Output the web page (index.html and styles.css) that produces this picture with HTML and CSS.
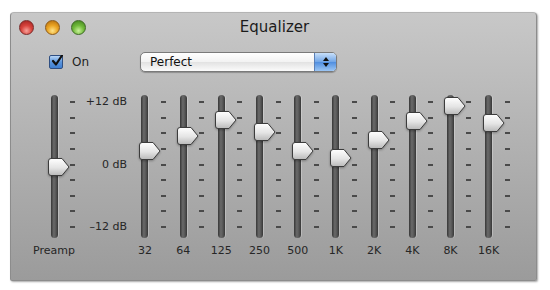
FILE: index.html
```html
<html>
<head>
  <link rel="stylesheet" href="styles.css">
</head>
<body>
  <div class="window">
    <div class="titlebar">
      <div class="lights">
        <span class="light red"></span>
        <span class="light orange"></span>
        <span class="light green"></span>
      </div>
      <div class="title">Equalizer</div>
      <div></div>
    </div>

    <div class="controls">
      <label class="check">
        <span class="box">
          <svg width="12" height="12" viewBox="0 0 12 12"><path d="M2 6 L5 9.5 L11 0.5" fill="none" stroke="#111" stroke-width="2.2" stroke-linecap="round" stroke-linejoin="round"/></svg>
        </span>
        On
      </label>
      <div class="popup">
        <span class="popup-text">Perfect</span>
        <span class="popup-arrows">
          <svg width="8" height="12" viewBox="0 0 8 12"><path d="M4 1 L7 5 H1 Z M4 11 L7 7 H1 Z" fill="#111"/></svg>
        </span>
      </div>
    </div>

    <div class="eq">
      <div class="band">
        <div class="band-top">
          <div class="slot"><div class="track"></div><svg class="thumb" style="top:63px" width="22" height="18" viewBox="0 0 22 18"><use href="#knob"/></svg></div>
          <div class="ticks"><i></i><i></i><i></i><i></i><i></i><i></i><i></i><i></i><i></i></div>
        </div>
        <div class="label">Preamp</div>
      </div>

      <div class="scale">
        <span>+12 dB</span>
        <span>0 dB</span>
        <span>–12 dB</span>
      </div>

      <div class="band">
        <div class="band-top">
          <div class="slot"><div class="track"></div><svg class="thumb" style="top:47px" width="22" height="18" viewBox="0 0 22 18"><use href="#knob"/></svg></div>
          <div class="ticks"><i></i><i></i><i></i><i></i><i></i><i></i><i></i><i></i><i></i></div>
        </div>
        <div class="label">32</div>
      </div>
      <div class="band">
        <div class="band-top">
          <div class="slot"><div class="track"></div><svg class="thumb" style="top:32px" width="22" height="18" viewBox="0 0 22 18"><use href="#knob"/></svg></div>
          <div class="ticks"><i></i><i></i><i></i><i></i><i></i><i></i><i></i><i></i><i></i></div>
        </div>
        <div class="label">64</div>
      </div>
      <div class="band">
        <div class="band-top">
          <div class="slot"><div class="track"></div><svg class="thumb" style="top:16px" width="22" height="18" viewBox="0 0 22 18"><use href="#knob"/></svg></div>
          <div class="ticks"><i></i><i></i><i></i><i></i><i></i><i></i><i></i><i></i><i></i></div>
        </div>
        <div class="label">125</div>
      </div>
      <div class="band">
        <div class="band-top">
          <div class="slot"><div class="track"></div><svg class="thumb" style="top:28px" width="22" height="18" viewBox="0 0 22 18"><use href="#knob"/></svg></div>
          <div class="ticks"><i></i><i></i><i></i><i></i><i></i><i></i><i></i><i></i><i></i></div>
        </div>
        <div class="label">250</div>
      </div>
      <div class="band">
        <div class="band-top">
          <div class="slot"><div class="track"></div><svg class="thumb" style="top:47px" width="22" height="18" viewBox="0 0 22 18"><use href="#knob"/></svg></div>
          <div class="ticks"><i></i><i></i><i></i><i></i><i></i><i></i><i></i><i></i><i></i></div>
        </div>
        <div class="label">500</div>
      </div>
      <div class="band">
        <div class="band-top">
          <div class="slot"><div class="track"></div><svg class="thumb" style="top:54px" width="22" height="18" viewBox="0 0 22 18"><use href="#knob"/></svg></div>
          <div class="ticks"><i></i><i></i><i></i><i></i><i></i><i></i><i></i><i></i><i></i></div>
        </div>
        <div class="label">1K</div>
      </div>
      <div class="band">
        <div class="band-top">
          <div class="slot"><div class="track"></div><svg class="thumb" style="top:36px" width="22" height="18" viewBox="0 0 22 18"><use href="#knob"/></svg></div>
          <div class="ticks"><i></i><i></i><i></i><i></i><i></i><i></i><i></i><i></i><i></i></div>
        </div>
        <div class="label">2K</div>
      </div>
      <div class="band">
        <div class="band-top">
          <div class="slot"><div class="track"></div><svg class="thumb" style="top:17px" width="22" height="18" viewBox="0 0 22 18"><use href="#knob"/></svg></div>
          <div class="ticks"><i></i><i></i><i></i><i></i><i></i><i></i><i></i><i></i><i></i></div>
        </div>
        <div class="label">4K</div>
      </div>
      <div class="band">
        <div class="band-top">
          <div class="slot"><div class="track"></div><svg class="thumb" style="top:2px" width="22" height="18" viewBox="0 0 22 18"><use href="#knob"/></svg></div>
          <div class="ticks"><i></i><i></i><i></i><i></i><i></i><i></i><i></i><i></i><i></i></div>
        </div>
        <div class="label">8K</div>
      </div>
      <div class="band">
        <div class="band-top">
          <div class="slot"><div class="track"></div><svg class="thumb" style="top:19px" width="22" height="18" viewBox="0 0 22 18"><use href="#knob"/></svg></div>
          <div class="ticks"><i></i><i></i><i></i><i></i><i></i><i></i><i></i><i></i><i></i></div>
        </div>
        <div class="label">16K</div>
      </div>
    </div>
  </div>

  <!-- shared slider knob -->
  <svg width="0" height="0" class="defs">
    <defs>
      <linearGradient id="knobfill" x1="0" y1="0" x2="0" y2="1">
        <stop offset="0" stop-color="#ffffff"/>
        <stop offset="0.55" stop-color="#e4e4e4"/>
        <stop offset="1" stop-color="#b9b9b9"/>
      </linearGradient>
      <g id="knob">
        <path d="M3 0.5 H14 L21 9 L14 17.5 H3 Q0.5 17.5 0.5 15 V3 Q0.5 0.5 3 0.5 Z" fill="url(#knobfill)" stroke="#3c3c3c" stroke-width="1"/>
      </g>
    </defs>
  </svg>
</body>
</html>
```

FILE: styles.css
```css
body {
  margin: 0;
  background: #fff;
  font-family: "DejaVu Sans", "Liberation Sans", sans-serif;
  color: #222;
}

.defs {
  position: absolute;
}

.window {
  box-sizing: border-box;
  margin: 12px 0 0 10px;
  width: 527px;
  height: 269px;
  border: 1px solid #8c8c8c;
  border-top-color: #b4b4b4;
  border-radius: 4px 4px 2px 2px;
  background: linear-gradient(#c8c8c8, #b3b3b3 45%, #9b9b9b);
  box-shadow: 1px 1px 2px rgba(0, 0, 0, 0.35);
}

/* title bar */
.titlebar {
  display: grid;
  grid-template-columns: 1fr auto 1fr;
  align-items: center;
  height: 28px;
}

.lights {
  display: flex;
  gap: 11px;
  padding-left: 8px;
}

.light {
  width: 15px;
  height: 15px;
  border-radius: 50%;
  box-sizing: border-box;
}

.red {
  background: radial-gradient(circle at 50% 75%, #f7a29a, #d8443d 45%, #9c1f1c);
  border: 1px solid #7c2a28;
}

.orange {
  background: radial-gradient(circle at 50% 75%, #fde38a, #eba524 45%, #b0670a);
  border: 1px solid #8c5a1a;
}

.green {
  background: radial-gradient(circle at 50% 75%, #c9f19a, #72bb3c 45%, #3c7e1a);
  border: 1px solid #3f6a25;
}

.title {
  font-size: 15px;
  color: #1b1b1b;
  margin-left: 2px;
}

/* on / preset row */
.controls {
  display: flex;
  align-items: center;
  height: 20px;
  margin-top: 11px;
  padding-left: 38px;
}

.check {
  display: flex;
  align-items: center;
  gap: 9px;
  font-size: 12px;
  width: 91px;
}

.box {
  box-sizing: border-box;
  width: 14px;
  height: 14px;
  border: 1px solid #2f4f82;
  border-radius: 2px;
  background: linear-gradient(#b9d6f6, #5b95dc 50%, #3f7fd1);
  display: flex;
  align-items: center;
  justify-content: center;
}

.box svg {
  margin: -3px -2px 0 0;
}

.popup {
  box-sizing: border-box;
  display: flex;
  width: 197px;
  height: 20px;
  border: 1px solid #7a7a7a;
  border-radius: 5px;
  background: linear-gradient(#ffffff, #f2f2f2 50%, #e2e2e2 51%, #fbfbfb);
  box-shadow: 0 1px 1px rgba(0, 0, 0, 0.25);
  overflow: hidden;
}

.popup-text {
  flex: 1;
  font-size: 12px;
  line-height: 18px;
  padding-left: 9px;
  color: #111;
}

.popup-arrows {
  width: 21px;
  display: flex;
  align-items: center;
  justify-content: center;
  border-left: 1px solid #5a7fb6;
  background: linear-gradient(#c8e0fa, #6fa4e6 50%, #4f8ee0 51%, #9cc6f4);
}

/* sliders */
.eq {
  display: flex;
  margin-top: 23px;
  padding-left: 33px;
}

.band {
  display: flex;
  flex-direction: column;
  width: 38.2px;
}

.band-top {
  display: flex;
  height: 143px;
}

.slot {
  position: relative;
  width: 20px;
  display: flex;
  justify-content: center;
}

.track {
  width: 7px;
  border-radius: 4px;
  background: linear-gradient(90deg, #363636, #6a6a6a 40%, #565656 70%, #363636);
  box-shadow: 1px 0 0 rgba(255, 255, 255, 0.25);
}

.thumb {
  position: absolute;
  left: 4px;
  filter: drop-shadow(0 1px 1px rgba(0, 0, 0, 0.3));
}

.ticks {
  display: flex;
  flex-direction: column;
  justify-content: space-between;
  padding: 6px 0 10px 6px;
}

.ticks i {
  display: block;
  width: 5px;
  height: 2px;
  background: #4a4a4a;
}

.label {
  width: 20px;
  display: flex;
  justify-content: center;
  white-space: nowrap;
  font-size: 11px;
  line-height: 14px;
  margin-top: 6px;
  color: #262626;
}

.scale {
  box-sizing: border-box;
  width: 52.8px;
  height: 143px;
  padding: 0 8px 4px 0;
  display: flex;
  flex-direction: column;
  justify-content: space-between;
  align-items: flex-end;
  font-size: 11px;
  line-height: 14px;
  color: #262626;
}
```
